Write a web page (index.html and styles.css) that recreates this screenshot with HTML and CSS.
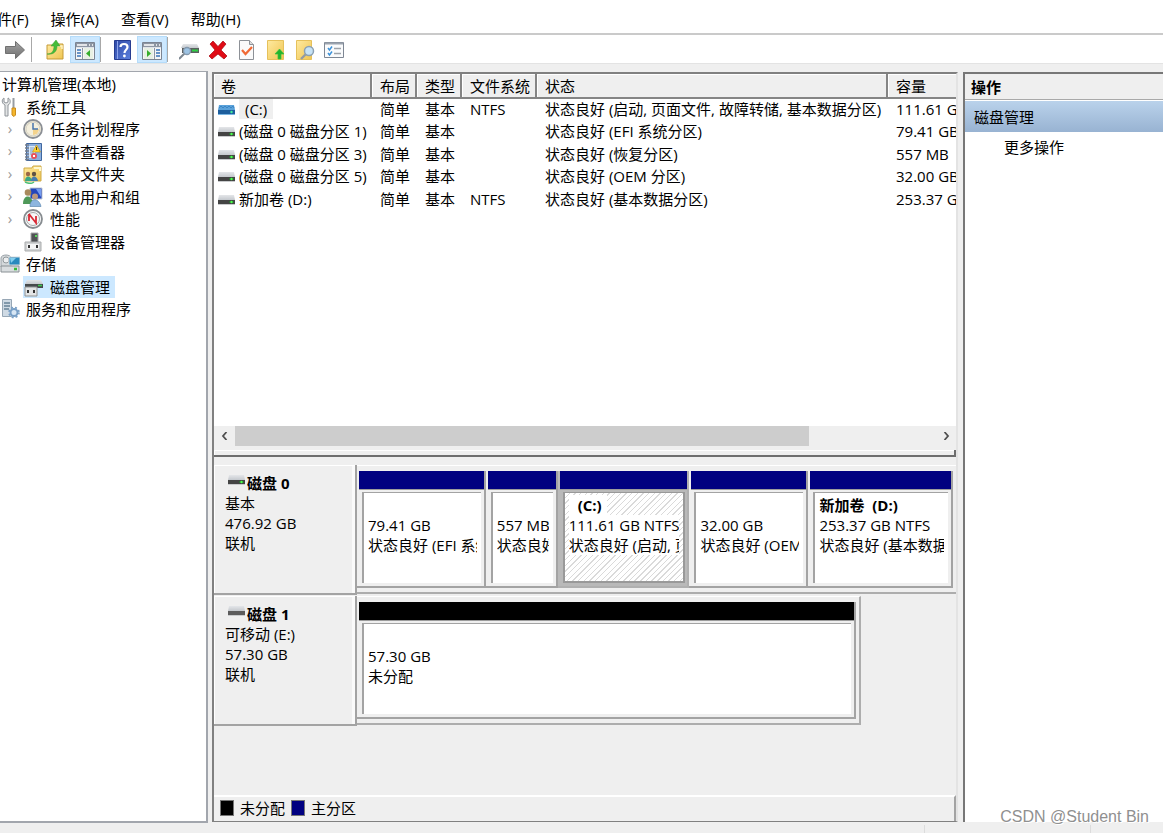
FILE: index.html
```html
<!DOCTYPE html>
<html lang="zh-CN">
<head>
<meta charset="utf-8">
<title>计算机管理</title>
<link rel="stylesheet" href="styles.css">
</head>
<body>
<svg class="defs" aria-hidden="true">
  <defs>
    <linearGradient id="silver" x1="0" y1="0" x2="0" y2="1"><stop offset="0" stop-color="#e4e6e9"/><stop offset="1" stop-color="#c4c8cd"/></linearGradient>
    <linearGradient id="gold" x1="0" y1="0" x2="1" y2="1"><stop offset="0" stop-color="#ffeaa0"/><stop offset="1" stop-color="#efc552"/></linearGradient>
    <linearGradient id="royal" x1="0" y1="0" x2="1" y2="1"><stop offset="0" stop-color="#2f49a5"/><stop offset="1" stop-color="#5c80de"/></linearGradient>
    <linearGradient id="steel" x1="0" y1="0" x2="0" y2="1"><stop offset="0" stop-color="#a5a5a5"/><stop offset="1" stop-color="#6f6f6f"/></linearGradient>
    <symbol id="drive" viewBox="0 0 17 10"><path d="M1 0h15l1 5H0z" fill="url(#silver)"/><path d="M0 5h17v4H0z" fill="#444"/><path d="M0 9h17v1H0z" fill="#c9cbcd"/><path d="M11 7h5" stroke="#1c8d2b"/><circle cx="13.500" cy="7" r="1.200" fill="#4dff4d"/></symbol>
    <symbol id="drive-blue" viewBox="0 0 17 10"><path d="M1 0h15l1 5H0z" fill="#5ba2da"/><path d="M1 3l2-2 2 2 2-2 2 2 2-2 2 2 2-2 1 2" fill="none" stroke="#3b86c5"/><path d="M0 5h17v4H0z" fill="#1d5e9d"/><path d="M0 9h17v1H0z" fill="#7ab5e2"/><circle cx="13.500" cy="7" r="1.200" fill="#42ee9b"/></symbol>
    <symbol id="drive-plain" viewBox="0 0 17 10"><path d="M1 0h15l1 5H0z" fill="url(#silver)"/><path d="M0 5h17v4H0z" fill="#5c5c5c"/><path d="M0 9h17v1H0z" fill="#c9cbcd"/></symbol>
    <symbol id="pane" viewBox="0 0 20 18"><path d="M.5.5h19v17H.5z" fill="#f4f5f7" stroke="#7b8492"/><path d="M1 1h18v5H1z" fill="#8d96a3"/><path d="M2 3h10M14 3h1M17 3h1" stroke="#fff" stroke-width="1.4"/><path d="M1 5.500h18" stroke="#dfe3e8"/></symbol>
  </defs>
</svg>

<nav class="menu">
  <button class="menu-item">件(F)</button>
  <button class="menu-item">操作(A)</button>
  <button class="menu-item">查看(V)</button>
  <button class="menu-item">帮助(H)</button>
</nav>

<div class="toolbar">
  <button class="tool" aria-label="前进"><svg class="ico" viewBox="0 0 20 20"><path d="M.5 6.500h10v-5l9 8.500-9 8.500v-5H.5z" fill="url(#steel)" stroke="#707070"/></svg></button>
  <span class="rule"></span>
  <button class="tool" aria-label="上一级"><svg class="ico" viewBox="0 0 20 20"><path d="M2 5h8l1-1h7v15H2z" fill="url(#gold)" stroke="#c59a37"/><path d="M11 6h6v3" fill="none" stroke="#fff3c4" stroke-width="1.500"/><path d="M2 14c5 0 7-3 7-8H6l5-6 4 6h-3c0 6-4 9-10 8z" fill="#45bd3a" stroke="#3c9a34" stroke-width=".5"/></svg></button>
  <button class="tool on" aria-label="显示控制台树"><svg class="ico" viewBox="0 0 20 20"><use href="#pane" y="2" width="20" height="18"/><path d="M7.500 8v11" stroke="#8d96a3"/><path d="M2 10h4M2 13h4M2 16h4" stroke="#3974b9" stroke-width="1.500"/><path d="M9 8h9v11H9z" fill="#e8f0e4"/><path d="M15 10v7l-4-3.500z" fill="#35ad2b"/></svg></button>
  <span class="rule tight"></span>
  <button class="tool" aria-label="帮助"><svg class="ico" viewBox="0 0 20 20"><path d="M2.500.5h16v19h-16z" fill="url(#royal)" stroke="#263c91"/><path d="M5.500 1v18" stroke="#8da4ea"/><path d="M8.500 7c0-4 7-4 7 0 0 3-3 2.500-3 6" fill="none" stroke="#fff" stroke-width="2.200"/><circle cx="12.400" cy="16" r="1.400" fill="#fff"/></svg></button>
  <button class="tool on" aria-label="显示操作窗格"><svg class="ico" viewBox="0 0 20 20"><use href="#pane" y="2" width="20" height="18"/><path d="M12.500 8v11" stroke="#8d96a3"/><path d="M14 10h4M14 13h4M14 16h4" stroke="#3974b9" stroke-width="1.500"/><path d="M2 8h9v11H2z" fill="#e8f0e4"/><path d="M5 10v7l4-3.500z" fill="#35ad2b"/></svg></button>
  <span class="rule tight"></span>
  <button class="tool" aria-label="刷新磁盘"><svg class="ico" viewBox="0 0 20 20"><path d="M4 4h14l2 4H2z" fill="url(#silver)"/><path d="M3 8h17v5H3z" fill="#5c6060"/><path d="M13 10.500h6" stroke="#2cd044" stroke-width="2"/><path d="M6 13l-6 6" stroke="#7d8791" stroke-width="2"/><circle cx="8" cy="11" r="3.500" fill="#9dc3e3" stroke="#8498ac" stroke-width="1.300"/></svg></button>
  <button class="tool" aria-label="删除"><svg class="ico" viewBox="0 0 20 20"><path d="M2 4l3-3 5 5.500L15 1l3 3-5 6 6 6-3 3-6-5-6 5-3-3 6-6z" fill="#e00b16" stroke="#a60710" stroke-width=".7"/></svg></button>
  <button class="tool" aria-label="属性"><svg class="ico" viewBox="0 0 20 20"><path d="M2.500.5h10l4 4v15h-14z" fill="#fafafa" stroke="#8d9197"/><path d="M12.500.5v4h4" fill="#ddd" stroke="#8d9197"/><path d="M5 10l3.500 4L15 7" fill="none" stroke="#f06a35" stroke-width="2.200"/></svg></button>
  <button class="tool" aria-label="打开"><svg class="ico" viewBox="0 0 20 20"><path d="M1.500.5h16v19h-16z" fill="url(#gold)" stroke="#e6c15b"/><path d="M13.500 9l4.500 5h-3v5h-3v-5H9z" fill="#22b52c" stroke="#3cbf3c" stroke-width=".7"/></svg></button>
  <button class="tool" aria-label="查找"><svg class="ico" viewBox="0 0 20 20"><path d="M1.500.5h15v19h-15z" fill="url(#gold)" stroke="#e6c15b"/><path d="M11 14l-5 5" stroke="#929ba3" stroke-width="2.400"/><circle cx="14" cy="11" r="4.500" fill="#c7e3f6" stroke="#8ba0b3" stroke-width="1.500"/></svg></button>
  <button class="tool" aria-label="列表"><svg class="ico" viewBox="0 0 20 20"><path d="M.5 2.500h19v15H.5z" fill="#fafbfc" stroke="#7e8794"/><path d="M1 3.500h18" stroke="#9ba3ae" stroke-width="2"/><path d="M4 8l1.500 2L8 6.500M4 13l1.500 2L8 11.500" fill="none" stroke="#3c92da" stroke-width="1.500"/><path d="M10 8.500h7M10 13.500h7" stroke="#9da3aa" stroke-width="1.300"/></svg></button>
</div>

<main class="work">
  <section class="tree-pane">
    <ul class="tree">
      <li class="node root">计算机管理(本地)</li>
      <li class="node group"><svg class="ico" viewBox="0 0 20 20"><path d="M5 8C1 6 2 2 4 1v4l2 1 2-1V1c3 1 3 6 0 7v11H5z" fill="#e2e4e5" stroke="#90959a"/><path d="M13.500 1v10" stroke="#969ca2" stroke-width="2"/><path d="M12 11h3.500v7l-1.500 1.500-2-1.500z" fill="#f4b62c" stroke="#c98c1d"/></svg>系统工具</li>
      <li class="node leaf"><button class="twist" aria-label="展开">›</button><svg class="ico" viewBox="0 0 20 20"><circle cx="10" cy="10" r="9" fill="#f4efdd" stroke="#8b8f95" stroke-width="1.800"/><circle cx="10" cy="10" r="7" fill="none" stroke="#d4d0c2"/><path d="M10 10h6a6 6 0 0 1-6 6z" fill="#f4d38c"/><path d="M10 4v6h5" fill="none" stroke="#4775ad" stroke-width="1.500"/></svg>任务计划程序</li>
      <li class="node leaf"><button class="twist" aria-label="展开">›</button><svg class="ico" viewBox="0 0 20 20"><path d="M3.500 1.500h15v17h-15z" fill="#8cb0e0" stroke="#40679f"/><path d="M6 4h6v12H6z" fill="#dce9f8"/><path d="M7 6h4M7 8h4M7 10h4M7 12h3" stroke="#7f9fc7"/><path d="M2 3h4M2 6h4M2 9h4M2 12h4M2 15h4M2 17.500h4" stroke="#777f8c" stroke-width="1.300"/><path d="M13.500 3l4 7h-8z" fill="#ffd22f" stroke="#c79512" stroke-width=".6"/><path d="M13.500 5v3" stroke="#544100"/><circle cx="11" cy="14" r="3" fill="#e8505c"/><path d="M10 13l2 2m0-2l-2 2" stroke="#fff"/></svg>事件查看器</li>
      <li class="node leaf"><button class="twist" aria-label="展开">›</button><svg class="ico" viewBox="0 0 20 20"><path d="M1 4h8l1-2h8v15H1z" fill="url(#gold)" stroke="#ceaa46"/><path d="M11 4h6v3" fill="none" stroke="#fff8d0" stroke-width="2"/><circle cx="5" cy="10" r="2.200" fill="#9b6744"/><circle cx="11" cy="10" r="2.200" fill="#5f5344"/><path d="M2 17c0-6 6-6 7 0z" fill="#39a683"/><path d="M8 17c0-6 6-6 7 0z" fill="#477cad"/><path d="M2 18c3 1.500 7 1.500 9 0" fill="none" stroke="#4fbf73" stroke-width="1.500"/></svg>共享文件夹</li>
      <li class="node leaf"><button class="twist" aria-label="展开">›</button><svg class="ico" viewBox="0 0 20 20"><path d="M7 1h12v11H7z" fill="#2346bb" stroke="#c0c8d4"/><path d="M13 2h5v8z" fill="#759cf0"/><circle cx="5" cy="5.500" r="3.300" fill="#a98a5d"/><circle cx="12" cy="9.500" r="3" fill="#b9977c"/><path d="M0 17c0-10 9-10 10 0z" fill="#4f9959"/><path d="M7 19.500c0-9 9-9 11 0z" fill="#8db5df" stroke="#5f89b2" stroke-width=".7"/></svg>本地用户和组</li>
      <li class="node leaf"><button class="twist" aria-label="展开">›</button><svg class="ico" viewBox="0 0 20 20"><circle cx="10" cy="10" r="9" fill="#f7f7f7" stroke="#878c90" stroke-width="1.800"/><circle cx="10" cy="10" r="6.500" fill="none" stroke="#a4a9aa"/><path d="M6 5l7 9V7M6 12V5" fill="none" stroke="#d92935" stroke-width="1.800"/></svg>性能</li>
      <li class="node leaf"><span class="twist"></span><svg class="ico" viewBox="0 0 20 20"><path d="M8 1h7v10H8z" fill="#505255" stroke="#a4a6a8"/><path d="M12 4h2" stroke="#55d757" stroke-width="2"/><path d="M2 10h16v9H2z" fill="#d1d3d4" stroke="#abadae"/><path d="M4 12h12v5H4z" fill="#f5f5f5"/><path d="M6 13v3M14 13v3" stroke="#333" stroke-width="2"/></svg>设备管理器</li>
      <li class="node group"><svg class="ico" viewBox="0 0 20 20"><path d="M1 4c0-4 10-4 10 0v9H1z" fill="#d4d8da" stroke="#9ba3a9"/><circle cx="6" cy="6" r="3" fill="#eceeef" stroke="#92999d"/><path d="M9 3h11v8H9z" fill="#2889bd" stroke="#d4dce1"/><path d="M10 4h6l-5 5z" fill="#84ceee"/><path d="M1 12h18v6H1z" fill="#d9dddf" stroke="#899094"/><path d="M14 15h3" stroke="#35bc36" stroke-width="2.500"/></svg>存储</li>
      <li class="node leaf"><span class="twist"></span><span class="picked"><svg class="ico" viewBox="0 0 20 20"><path d="M4 3h14l2 4H2z" fill="url(#silver)"/><path d="M2 7h18v4H2z" fill="#464a4c"/><path d="M15 8.500h4" stroke="#3dcc4e" stroke-width="1.500"/><path d="M2 10h12v9H2z" fill="#e3e5e6" stroke="#909394"/><path d="M5 13v3M11 13v3" stroke="#333" stroke-width="2"/></svg>磁盘管理</span></li>
      <li class="node group"><svg class="ico" viewBox="0 0 20 20"><path d="M2.500.5h9v17h-9z" fill="#cfdae4" stroke="#97a7b5"/><path d="M4 4h6M4 7h6M4 10h5" stroke="#688296" stroke-width="1.500"/><circle cx="14" cy="13.500" r="3.500" fill="#d7e6f4" stroke="#789fc6" stroke-width="2"/><circle cx="14" cy="13.500" r="5" fill="none" stroke="#789fc6" stroke-width="1.600" stroke-dasharray="2 2"/></svg>服务和应用程序</li>
    </ul>
  </section>

  <section class="center-pane">
    <div class="volumes">
      <table class="vol-table">
        <colgroup><col class="c-name"><col class="c-short"><col class="c-short"><col class="c-fs"><col class="c-state"><col></colgroup>
        <thead><tr><th>卷</th><th>布局</th><th>类型</th><th>文件系统</th><th>状态</th><th>容量</th></tr></thead>
        <tbody>
          <tr><td class="vol"><svg class="drv"><use href="#drive-blue"/></svg><span class="current">(C:)</span></td><td>简单</td><td>基本</td><td>NTFS</td><td>状态良好 (启动, 页面文件, 故障转储, 基本数据分区)</td><td>111.61 GB</td></tr>
          <tr><td class="vol"><svg class="drv"><use href="#drive"/></svg>(磁盘 0 磁盘分区 1)</td><td>简单</td><td>基本</td><td></td><td>状态良好 (EFI 系统分区)</td><td>79.41 GB</td></tr>
          <tr><td class="vol"><svg class="drv"><use href="#drive"/></svg>(磁盘 0 磁盘分区 3)</td><td>简单</td><td>基本</td><td></td><td>状态良好 (恢复分区)</td><td>557 MB</td></tr>
          <tr><td class="vol"><svg class="drv"><use href="#drive"/></svg>(磁盘 0 磁盘分区 5)</td><td>简单</td><td>基本</td><td></td><td>状态良好 (OEM 分区)</td><td>32.00 GB</td></tr>
          <tr><td class="vol"><svg class="drv"><use href="#drive"/></svg>新加卷 (D:)</td><td>简单</td><td>基本</td><td>NTFS</td><td>状态良好 (基本数据分区)</td><td>253.37 GB</td></tr>
        </tbody>
      </table>
      <div class="hscroll">
        <button class="arrow" aria-label="向左滚动"><svg class="chev" viewBox="0 0 8 8"><path d="M5.500 0L2 4l3.500 4" fill="none" stroke="#505050" stroke-width="1.800"/></svg></button>
        <div class="track"><div class="thumb"></div></div>
        <button class="arrow" aria-label="向右滚动"><svg class="chev" viewBox="0 0 8 8"><path d="M2.500 0L6 4 2.500 8" fill="none" stroke="#505050" stroke-width="1.800"/></svg></button>
      </div>
    </div>
    <div class="splitter"></div>
    <div class="disks">
      <article class="disk">
        <div class="disk-info">
          <h2 class="disk-name"><svg class="drv"><use href="#drive"/></svg>磁盘 0</h2>
          <p>基本</p><p>476.92 GB</p><p>联机</p>
        </div>
        <div class="strip">
          <div class="part" style="flex-grow:129"><div class="bar"></div><div class="well"><p></p><p>79.41 GB</p><p>状态良好 (EFI 系统</p></div></div>
          <div class="part" style="flex-grow:71"><div class="bar"></div><div class="well"><p></p><p>557 MB</p><p>状态良好</p></div></div>
          <div class="part chosen" style="flex-grow:132"><div class="bar"></div><div class="well"><p><b class="letter">(C:)</b></p><p><span>111.61 GB NTFS</span></p><p><span>状态良好 (启动, 页</span></p></div></div>
          <div class="part" style="flex-grow:119"><div class="bar"></div><div class="well"><p></p><p>32.00 GB</p><p>状态良好 (OEM</p></div></div>
          <div class="part" style="flex-grow:145"><div class="bar"></div><div class="well"><p><b>新加卷&nbsp; (D:)</b></p><p>253.37 GB NTFS</p><p>状态良好 (基本数据</p></div></div>
        </div>
      </article>
      <article class="disk">
        <div class="disk-info">
          <h2 class="disk-name"><svg class="drv"><use href="#drive-plain"/></svg>磁盘 1</h2>
          <p>可移动 (E:)</p><p>57.30 GB</p><p>联机</p>
        </div>
        <div class="strip short">
          <div class="part free" style="flex-grow:1"><div class="bar"></div><div class="well"><p></p><p>57.30 GB</p><p>未分配</p></div></div>
        </div>
      </article>
    </div>
    <div class="legend">
      <span class="key"><i class="swatch black"></i>未分配</span>
      <span class="key"><i class="swatch navy"></i>主分区</span>
    </div>
  </section>

  <aside class="action-pane">
    <h2 class="action-title">操作</h2>
    <h3 class="action-head">磁盘管理</h3>
    <button class="action-item">更多操作</button>
  </aside>
</main>

<footer class="status"><span class="cell wide"></span><span class="cell mid"></span><span class="cell"></span></footer>
<div class="credit">CSDN @Student Bin</div>
</body>
</html>
```

FILE: styles.css
```css
* { box-sizing: border-box; }

body {
  margin: 0;
  min-height: 100vh;
  display: flex;
  flex-direction: column;
  position: relative;
  overflow: hidden;
  background: #efefef;
  color: #000;
  font: 15px/20px "Open Sans", "Noto Sans CJK SC", sans-serif;
}

button {
  border: 0;
  padding: 0;
  background: none;
  font: inherit;
  color: inherit;
}

h2, h3, p, ul { margin: 0; padding: 0; }

.defs { position: absolute; width: 0; height: 0; }
.ico { width: 20px; height: 20px; flex: none; }
.drv { width: 17px; height: 10px; flex: none; }

/* Menu and toolbar */
.menu {
  display: flex;
  gap: 22px;
  height: 35px;
  padding-top: 5px;
  background: #fff;
  border-bottom: 2px solid #cacaca;
}
.menu-item { white-space: nowrap; height: 28px; }
.menu-item:first-child { margin-left: -3px; }

.toolbar {
  display: flex;
  align-items: center;
  height: 29px;
  padding-top: 1px;
  background: #fff;
  border-bottom: 1px solid #e3e3e3;
}
.tool {
  display: flex;
  align-items: center;
  justify-content: center;
  width: 29px;
  height: 27px;
}
.tool.on { width: 30px; margin-left: 1px; background: #cce8ff; box-shadow: inset 0 0 0 1px #b5dcfa; }
.rule { width: 1px; height: 25px; margin: 0 8px 0 2px; background: #a8a8a8; }
.rule.tight { margin: 0 6px 0 0; }

/* Three panes */
.work {
  flex: 1;
  display: flex;
  padding-top: 7px;
}

.tree-pane {
  width: 208px;
  margin-right: 4px;
  background: #fff;
  border: solid #a2a6ad;
  border-width: 1px 2px 2px 0;
}
.tree {
  list-style: none;
  padding-top: 1px;
}
.node {
  display: flex;
  align-items: center;
  height: 22px;
  white-space: nowrap;
}
.node:nth-child(even) { height: 23px; }
.root { padding-left: 2px; }
.group { gap: 6px; }
.leaf .ico { margin-right: 7px; }
.twist { width: 23px; padding: 0 3px 3px 0; color: #999; text-align: center; }
.picked { display: flex; align-items: center; height: 22px; padding-right: 5px; background: #cce8ff; }

.center-pane {
  flex: 1;
  min-width: 0;
  display: flex;
  flex-direction: column;
  margin-top: 1px;
  margin-bottom: 1px;
  border: solid #808080;
  border-width: 2px 0 1px 2px;
  border-right: 2px solid #e3e3e3;
}
.volumes {
  height: 376px;
  display: flex;
  flex-direction: column;
  justify-content: space-between;
  background: #fff;
}
.vol-table {
  width: 100%;
  table-layout: fixed;
  border-collapse: separate;
  border-spacing: 0;
}
.c-name { width: 158px; }
.c-short { width: 45px; }
.c-fs { width: 75px; }
.c-state { width: 351px; }
th {
  height: 25px;
  padding: 0 0 0 8px;
  background: #efefef;
  border: solid #858585;
  border-width: 0 2px 2px 0;
  box-shadow: inset 1px 1px #fff;
  font-weight: 400;
  text-align: left;
  white-space: nowrap;
}
th:first-child { padding-left: 7px; }
th:last-child { border-right: 0; }
td {
  height: 22px;
  padding: 0 0 0 8px;
  overflow: hidden;
  white-space: nowrap;
  line-height: 20px;
  vertical-align: top;
}
tr:nth-child(even) td { height: 23px; }
.vol { padding-left: 4px; }
.vol .drv { margin-right: 4px; }
.current { display: inline-block; padding: 0 6px; background: #efefef; }

.hscroll {
  display: flex;
  height: 24px;
  padding-bottom: 4px;
  background: #efefef;
}
.arrow {
  width: 21px;
  display: flex;
  align-items: center;
  justify-content: center;
}
.chev { width: 8px; height: 8px; }
.track { flex: 1; }
.thumb { width: 82%; height: 20px; background: #cdcdcd; }
.splitter {
  height: 7px;
  background: #efefef;
  border: solid #6e6e6e;
  border-width: 0 2px 2px 0;
  box-shadow: inset 1px 1px #fff;
}

/* Disk map */
.disks { flex: 1; padding-top: 8px; }
.disk { display: flex; height: 131px; }
.disk-info {
  width: 143px;
  height: 130px;
  padding: 8px 0 0 11px;
  border: solid #a3a3a3;
  border-width: 0 2px 2px 0;
  box-shadow: inset 1px 1px #fff, inset -3px 0 #fafafa;
}
.disk-name { display: flex; font-size: 15px; line-height: 20px; padding-left: 3px; }
.disk-name .drv { margin-right: 2px; margin-top: 2px; }
.strip {
  flex: 1;
  min-width: 0;
  display: flex;
  height: 129px;
  padding: 5px 3px 4px 0;
  border-top: 1px solid #fff;
  border-bottom: 2px solid #adadad;
}
.short { flex: 0 1 504px; padding-right: 3px; border-right: 2px solid #adadad; }
.part {
  flex: 1 1 0;
  min-width: 0;
  display: flex;
  flex-direction: column;
  border: solid #a3a3a3;
  border-width: 0 2px 2px 0;
}
.bar { height: 19px; margin-left: 2px; background: #000080; border-bottom: 1px solid #9c9c9c; }
.free .bar { background: #000; }
.well {
  flex: 1;
  margin: 2px 3px 3px 5px;
  padding: 2px 4px 0 4px;
  background: #fff;
  border: solid #a3a3a3;
  border-width: 1px 0 0 2px;
}
.well p { height: 20px; overflow: hidden; white-space: nowrap; }
.chosen { background: #b9b9b9; border-color: #b0b0b0; }
.chosen .well {
  border-width: 1px 2px 2px;
  margin-right: 2px;
  background: repeating-linear-gradient(135deg, #fff 0 3px, #dadada 3px 4px);
  border-color: #999;
}
.chosen span, .letter { display: inline-block; height: 20px; background: #fff; }
.letter { padding: 0 5px 0 9px; }

.legend {
  display: flex;
  align-items: center;
  gap: 6px;
  height: 26px;
  padding: 0 0 2px 6px;
  border-top: 2px solid #fff;
  border-right: 2px solid #a3a3a3;
}
.key { display: flex; align-items: center; gap: 6px; }
.swatch { width: 14px; height: 16px; border: 1px solid #777; }
.black { background: #000; }
.navy { background: #000080; }

/* Actions */
.action-pane {
  width: 200px;
  margin: 1px 0 1px 5px;
  background: #fff;
  border: solid #777;
  border-width: 2px 0 0 2px;
}
.action-title {
  height: 26px;
  padding-left: 6px;
  background: #efefef;
  border-bottom: 1px solid #a9a9a9;
  font-size: 15px;
  line-height: 26px;
}
.action-head {
  height: 31px;
  margin-top: 1px;
  padding-left: 9px;
  background: linear-gradient(#bad2eb, #98b3d2);
  font-size: 15px;
  font-weight: 400;
  line-height: 32px;
}
.action-item { display: block; height: 30px; padding-left: 39px; }

.status {
  display: flex;
  height: 10px;
  padding-top: 2px;
}
.cell { flex: 1; }
.wide { flex: 0 0 925px; border-right: 1px solid #dcdcdc; }
.mid { flex: 0 0 166px; border-right: 1px solid #dcdcdc; }

.credit {
  position: absolute;
  right: 14px;
  bottom: 6px;
  color: #909090;
  font: 16px/20px "Liberation Sans", sans-serif;
  text-shadow: 1px 1px #fff;
}
```
